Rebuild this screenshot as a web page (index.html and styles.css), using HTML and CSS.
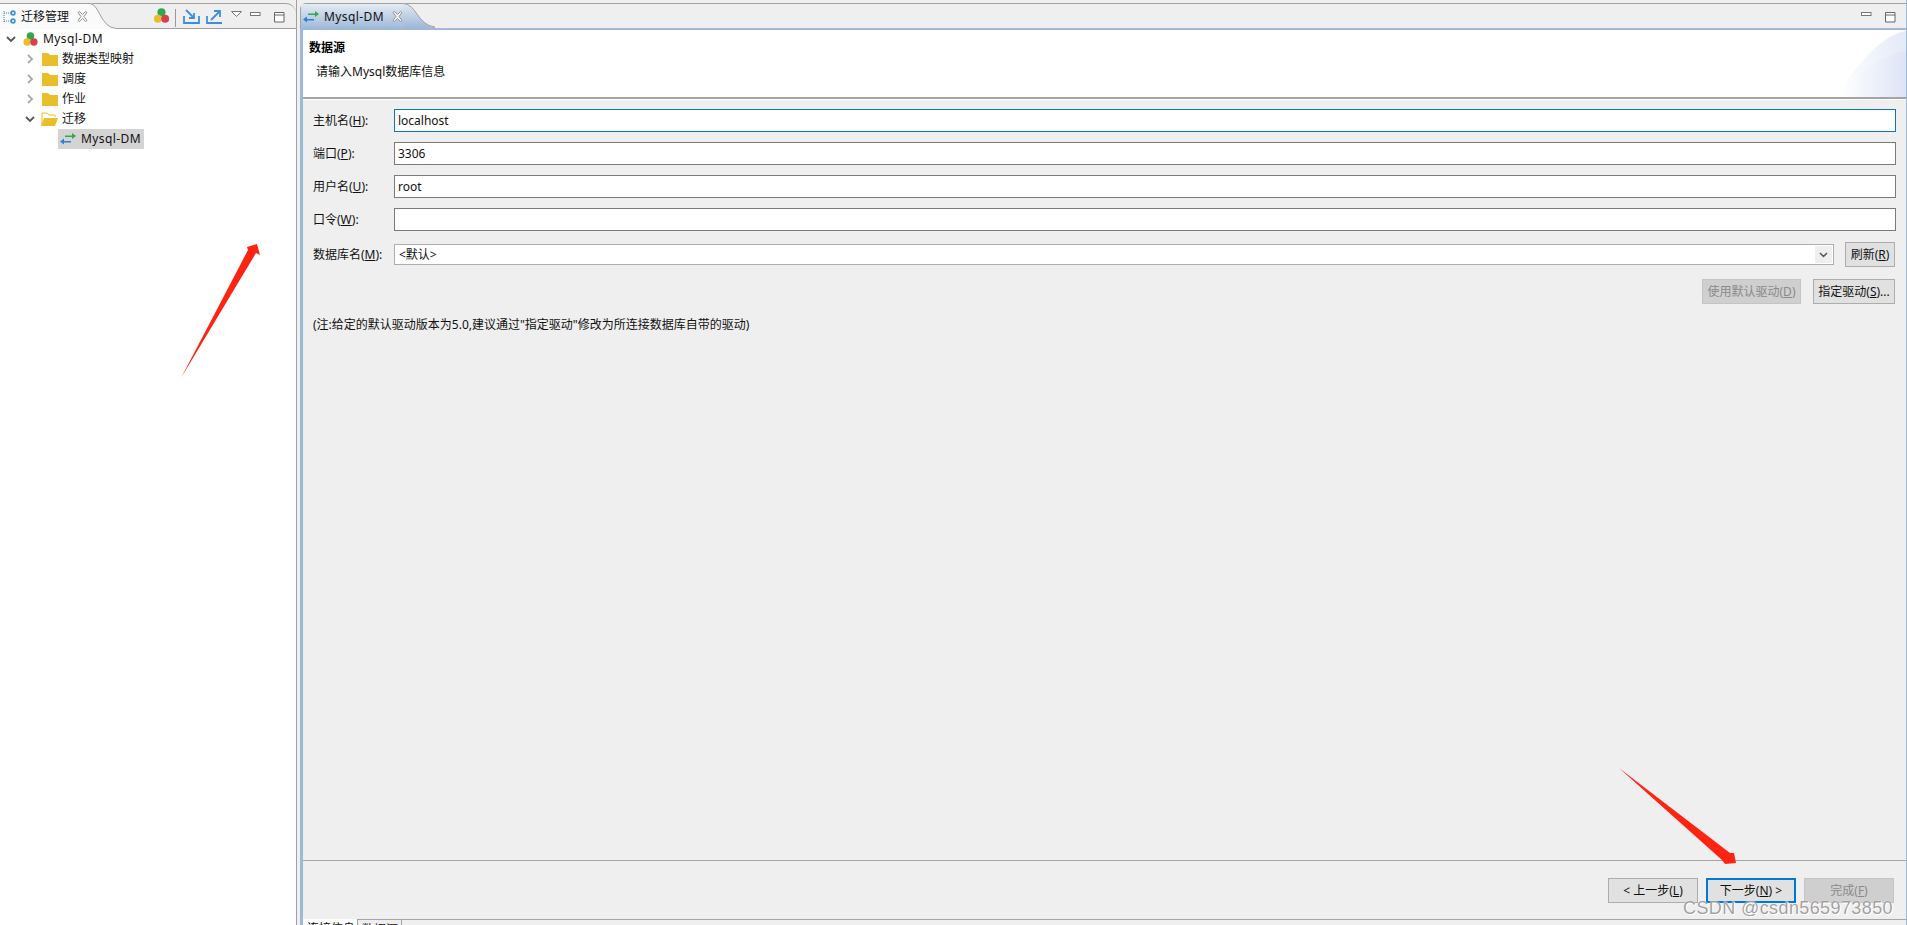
FILE: index.html
```html
<!DOCTYPE html>
<html lang="zh">
<head>
<meta charset="utf-8">
<title>迁移管理</title>
<link rel="stylesheet" href="styles.css">
</head>
<body>
<svg width="0" height="0" class="defs">
  <defs>
    <symbol id="tri" viewBox="0 0 14 14">
      <circle cx="7" cy="4" r="3.8" fill="#2fa84f"/>
      <circle cx="3.6" cy="10" r="3.7" fill="#e8bf2a"/>
      <circle cx="10.4" cy="10" r="3.7" fill="#d9404f"/>
    </symbol>
    <symbol id="swap" viewBox="0 0 16 12">
      <path d="M5 3h7V0.5L16 3.6l-4 3V4.6H5z" fill="#35a84c" transform="translate(0 -.5)"/>
      <path d="M11 8H4V5.6L0 8.6l4 3V9.6h7z" fill="#2f80d0"/>
    </symbol>
    <symbol id="close" viewBox="0 0 11 11">
      <path d="M1 1.5 2.5.5 5.5 3.5 8.5.5 10 1.5 7 5.5l3 4-1.500 1-3-3-3 3L1 9.500l3-4z" fill="#f4f4f4" stroke="#8a8a8a" stroke-width=".9"/>
    </symbol>
    <symbol id="folder" viewBox="0 0 16 14">
      <path d="M0 1h6l2 2h8v11H0z" fill="#e8bf2a"/>
    </symbol>
    <symbol id="min" viewBox="0 0 11 4">
      <rect x=".5" y=".5" width="9.500" height="3" fill="#fff" stroke="#777"/>
    </symbol>
    <symbol id="max" viewBox="0 0 11 11">
      <path d="M.5.5h9.500v9.500H.5zM.5 3h9.500" fill="#fff" stroke="#666"/>
    </symbol>
  </defs>
</svg>

<section class="view view-left">
  <header class="tabbar">
    <div class="tab tab-left">
      <svg class="tab-icon" width="13" height="14" viewBox="0 0 13 14">
        <path d="M1 1v11M1 3h7M1 11h7" stroke="#2f80d0" stroke-dasharray="1 1" fill="none"/>
        <circle cx="10" cy="3" r="2.700" fill="#3a8fdc"/><circle cx="10" cy="11" r="2.700" fill="#3a8fdc"/>
        <circle cx="10" cy="3" r="1" fill="#fff"/><circle cx="10" cy="11" r="1" fill="#fff"/>
      </svg>
      <span class="tab-label">迁移管理</span>
      <svg class="tab-close" width="11" height="11"><use href="#close"/></svg>
    </div>
    <svg class="tab-curve" width="26" height="26" viewBox="0 0 26 26">
      <path d="M0 0C10 2 10 24 26 25V26H0z" fill="#fafafa"/>
      <path d="M0 .5C10 2 10 24 26 25.500" fill="none" stroke="#a0a0a0"/>
    </svg>
    <div class="toolbar">
      <svg class="tool-tri" width="15" height="15"><use href="#tri"/></svg>
      <span class="tool-sep"></span>
      <svg class="tool-btn" width="17" height="15" viewBox="0 0 17 15">
        <path d="M1 7v7h15V7" fill="none" stroke="#3d8fdc" stroke-width="1.800"/>
        <path d="M3 1l7 7M11 4v5H6" fill="none" stroke="#3d8fdc" stroke-width="1.800"/>
      </svg>
      <svg class="tool-btn" width="17" height="15" viewBox="0 0 17 15">
        <path d="M1 7v7h15" fill="none" stroke="#3d8fdc" stroke-width="1.800"/>
        <path d="M5 11l8-8M8 2h6v6" fill="none" stroke="#3d8fdc" stroke-width="1.800"/>
      </svg>
      <svg class="tool-menu" width="11" height="6" viewBox="0 0 11 6"><path d="M.5.500h10L5.500 5.500z" fill="#fff" stroke="#777"/></svg>
      <svg class="tool-min" width="11" height="4"><use href="#min"/></svg>
      <svg class="tool-max" width="11" height="11"><use href="#max"/></svg>
    </div>
  </header>
  <div class="tree">
    <div class="node node-root">
      <svg class="chev" width="10" height="7" viewBox="0 0 10 7"><path d="M1 1l4 4 4-4" fill="none" stroke="#555" stroke-width="1.800"/></svg>
      <svg class="root-icon" width="15" height="14"><use href="#tri"/></svg>
      <span class="latin">Mysql-DM</span>
    </div>
    <div class="node node-group">
      <svg class="chev-r" width="7" height="10" viewBox="0 0 7 10"><path d="M1 1l4 4-4 4" fill="none" stroke="#aaa" stroke-width="1.800"/></svg>
      <svg class="folder" width="16" height="14"><use href="#folder"/></svg>
      <span>数据类型映射</span>
    </div>
    <div class="node node-group">
      <svg class="chev-r" width="7" height="10" viewBox="0 0 7 10"><path d="M1 1l4 4-4 4" fill="none" stroke="#aaa" stroke-width="1.800"/></svg>
      <svg class="folder" width="16" height="14"><use href="#folder"/></svg>
      <span>调度</span>
    </div>
    <div class="node node-group">
      <svg class="chev-r" width="7" height="10" viewBox="0 0 7 10"><path d="M1 1l4 4-4 4" fill="none" stroke="#aaa" stroke-width="1.800"/></svg>
      <svg class="folder" width="16" height="14"><use href="#folder"/></svg>
      <span>作业</span>
    </div>
    <div class="node node-open">
      <svg class="chev" width="10" height="7" viewBox="0 0 10 7"><path d="M1 1l4 4 4-4" fill="none" stroke="#555" stroke-width="1.800"/></svg>
      <svg class="folder-open" width="17" height="14" viewBox="0 0 17 14">
        <path d="M1 13V1h5l2 2h6v2" fill="#fff" stroke="#e8bf2a"/>
        <path d="M0 14l3-8h14l-3 8z" fill="#e8bf2a"/>
      </svg>
      <span>迁移</span>
    </div>
    <div class="node-leaf">
      <div class="leaf-sel">
        <svg class="leaf-icon" width="16" height="12"><use href="#swap"/></svg>
        <span class="latin">Mysql-DM</span>
      </div>
    </div>
  </div>
</section>

<section class="view view-right">
  <header class="tabbar tabbar-right">
    <div class="tab tab-active">
      <svg class="tab-swap" width="16" height="12"><use href="#swap"/></svg>
      <span class="tab-label latin">Mysql-DM</span>
      <svg class="tab-close" width="11" height="11"><use href="#close"/></svg>
    </div>
    <svg class="tab-curve" width="32" height="25" viewBox="0 0 32 25">
      <defs><linearGradient id="tabgrad" x1="0" y1="0" x2="0" y2="1"><stop offset="0" stop-color="#e4ebf3"/><stop offset="1" stop-color="#9db8d8"/></linearGradient></defs>
      <path d="M0 0C14 1 14 22 32 24V25H0z" fill="url(#tabgrad)"/>
      <path d="M0 .5C14 1 14 22 32 24" fill="none" stroke="#a0a0a0"/>
    </svg>
    <div class="toolbar toolbar-right">
      <svg class="tool-min" width="11" height="4"><use href="#min"/></svg>
      <svg class="tool-max" width="11" height="11"><use href="#max"/></svg>
    </div>
  </header>
  <div class="editor">
    <div class="banner">
      <div class="banner-text">
        <div class="banner-title">数据源</div>
        <div class="banner-sub">请输入Mysql数据库信息</div>
      </div>
      <svg class="banner-art" width="70" height="67" viewBox="0 0 70 66" preserveAspectRatio="none">
        <defs><linearGradient id="art" x1="0" y1="0" x2="1" y2="0"><stop offset="0" stop-color="#fff"/><stop offset="1" stop-color="#dde4f5"/></linearGradient></defs>
        <path d="M0 66C20 35 45 5 70 1V66z" fill="url(#art)" opacity=".8"/>
        <path d="M5 66C25 40 45 25 70 21V66z" fill="url(#art)"/>
      </svg>
    </div>
    <div class="form">
      <div class="row"><span class="lbl">主机名(<u>H</u>):</span><div class="field field-focus">localhost</div></div>
      <div class="row"><span class="lbl">端口(<u>P</u>):</span><div class="field">3306</div></div>
      <div class="row"><span class="lbl">用户名(<u>U</u>):</span><div class="field">root</div></div>
      <div class="row"><span class="lbl">口令(<u>W</u>):</span><div class="field"></div></div>
      <div class="row row-combo">
        <span class="lbl">数据库名(<u>M</u>):</span>
        <div class="combo"><span class="combo-val">&lt;默认&gt;</span>
          <span class="combo-arrow"><svg width="9" height="6" viewBox="0 0 9 6"><path d="M1 1l3.500 3.500L8 1" fill="none" stroke="#555" stroke-width="1.500"/></svg></span>
        </div>
        <button class="btn btn-refresh">刷新(<u>R</u>)</button>
      </div>
      <div class="row-actions">
        <button class="btn btn-disabled btn-default-driver">使用默认驱动(<u>D</u>)</button>
        <button class="btn btn-driver">指定驱动(<u>S</u>)...</button>
      </div>
      <p class="note">(注:给定的默认驱动版本为5.0,建议通过"指定驱动"修改为所连接数据库自带的驱动)</p>
    </div>
    <footer class="wizard">
      <button class="btn btn-wiz">&lt; 上一步(<u>L</u>)</button>
      <button class="btn btn-wiz btn-primary">下一步(<u>N</u>) &gt;</button>
      <button class="btn btn-wiz btn-disabled">完成(<u>F</u>)</button>
    </footer>
    <nav class="pages">
      <span class="page page-active">连接信息</span>
      <span class="page">数据源</span>
      <span class="page-rest"></span>
    </nav>
  </div>
</section>

<svg class="annot" width="1907" height="925" viewBox="0 0 1907 925">
  <path d="M181 378 248 250 247 247 257 244 260 255 256 253z" fill="#ff2312"/>
  <path d="M1619 768 1730 853 1734 853 1736 863 1725 864 1722 860z" fill="#ff2312"/>
</svg>
<div class="watermark">CSDN @csdn565973850</div>
</body>
</html>
```
FILE: styles.css
```css
* { box-sizing: border-box; }
html, body { margin: 0; height: 925px; overflow: hidden; }
body {
  position: relative;
  display: flex;
  background: #efefef;
  font: 12px/16px "Noto Sans", "Noto Sans CJK SC", sans-serif;
  color: #111;
}
.defs { position: absolute; }
svg { display: block; flex: none; }
u { text-underline-offset: 1px; }
.latin { letter-spacing: .4px; }

.view { display: flex; flex-direction: column; padding-top: 3px; height: 925px; }
.view-left { width: 297px; flex: none; border-right: 1px solid #a0a0a0; }
.view-right { width: 1607px; margin-left: 3px; flex: none; border-right: 1px solid #9db8d8; }

.tabbar { display: flex; height: 26px; flex: none; border-top: 1px solid #a0a0a0; border-top-right-radius: 10px; }
.tabbar-right { border-left: 1px solid #a0a0a0; border-top-left-radius: 6px; border-top-right-radius: 0; }
.tab { display: flex; align-items: center; height: 25px; }
.tab-left { width: 90px; padding-left: 3px; background: #fafafa; }
.tab-icon { margin-right: 5px; }
.tab-label { white-space: nowrap; }
.tab-left .tab-close { margin-left: 8px; }
.tab-curve { margin-top: -1px; }
.tab-active { width: 102px; padding-left: 2px; background: linear-gradient(#e4ebf3, #9db8d8); }
.tab-swap { margin-right: 5px; }
.tab-active .tab-close { margin-left: 8px; }

.toolbar { flex: 1; display: flex; align-items: flex-start; padding-top: 4px; border-bottom: 1px solid #a0a0a0; }
.tool-tri { margin-left: 38px; }
.tool-sep { width: 1px; height: 18px; margin: 1px 7px 0 6px; background: #999; }
.tool-btn { margin: 1px 6px 0 0; }
.tool-menu { margin: 3px 8px 0 2px; }
.tool-min { margin: 4px 13px 0 0; }
.tool-max { margin-top: 4px; }
.toolbar-right { justify-content: flex-end; padding-right: 10px; }

.tree { flex: 1; background: #fff; }
.node, .node-leaf { display: flex; align-items: center; height: 20px; }
.node-root { padding-left: 6px; }
.node-root .root-icon { margin: 0 5px 0 7px; }
.node-group { padding-left: 27px; }
.chev-r { margin-right: 8px; }
.folder { margin-right: 4px; }
.node-open { padding-left: 25px; }
.node-open .folder-open { margin: 0 4px 0 6px; }
.node-leaf { padding-left: 58px; }
.leaf-sel { display: flex; align-items: center; height: 20px; width: 86px; padding-left: 2px; background: #d4d4d4; }
.leaf-icon { margin-right: 5px; }

.editor { flex: 1; display: flex; flex-direction: column; min-height: 0; border-left: 3px solid #9db8d8; border-top: 2px solid #9db8d8; margin-top: -1px; }
.banner { display: flex; justify-content: space-between; height: 67px; flex: none; background: #fff; }
.banner-text { padding: 10px 0 0 6px; }
.banner-title { font-weight: 700; color: #000; height: 24px; }
.banner-sub { padding-left: 7px; }
.form { flex: 1; display: flex; flex-direction: column; padding: 10px 10px 0 10px; border-top: 2px solid #a4a4a4; box-shadow: inset 0 1px 0 #fff; }
.row { display: flex; align-items: center; height: 23px; margin-bottom: 10px; }
.lbl { width: 81px; flex: none; white-space: nowrap; }
.field { flex: 1; height: 23px; padding: 0 3px; line-height: 21px; background: #fff; border: 1px solid #7a7a7a; }
.field-focus { border-color: #0f73c6; }
.row-combo { height: 25px; margin: 1px 0 12px; }
.combo { flex: 1; display: flex; justify-content: space-between; align-items: center; height: 21px; padding: 0 1px 0 4px; background: #fff; border: 1px solid #adadad; }
.combo-arrow { display: flex; align-items: center; justify-content: center; width: 17px; height: 17px; background: #efefef; }
.btn { height: 25px; padding: 0; font: inherit; color: #111; background: #e1e1e1; border: 1px solid #adadad; white-space: nowrap; }
.btn-refresh { width: 50px; margin-left: 11px; margin-right: 1px; }
.row-actions { display: flex; justify-content: flex-end; gap: 12px; padding-right: 1px; }
.btn-default-driver { width: 99px; }
.btn-driver { width: 82px; }
.btn-disabled { color: #8a8a8a; background: #cfcfcf; border-color: #c4c4c4; }
.note { margin: 13px 0 0; }
.wizard { display: flex; justify-content: flex-end; gap: 8px; flex: none; height: 59px; padding: 17px 12px 0 0; border-top: 1px solid #a4a4a4; }
.btn-wiz { width: 90px; }
.btn-primary { border: 2px solid #0078d7; }
.pages { display: flex; height: 6px; flex: none; overflow: hidden; }
.page { padding: 2px 4px 0; width: 44px; white-space: nowrap; border-top: 1px solid #a4a4a4; border-right: 1px solid #a4a4a4; }
.page-active { width: 55px; background: #fff; border-top: 0; }
.page-rest { flex: 1; border-top: 1px solid #a4a4a4; }

.annot { position: absolute; left: 0; top: 0; pointer-events: none; }
.watermark {
  position: absolute;
  left: 1683px;
  top: 899px;
  font: 18px/18px "Liberation Sans", sans-serif;
  letter-spacing: .4px;
  color: rgba(130, 130, 130, .75);
  text-shadow: 0 0 1px #fff, 1px 1px 0 #fff;
  white-space: nowrap;
}
```
